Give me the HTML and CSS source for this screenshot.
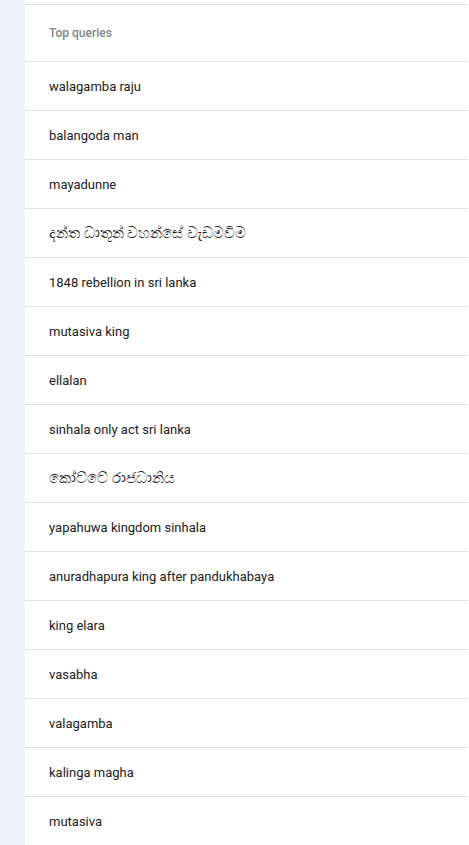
FILE: index.html
```html
<!DOCTYPE html>
<html lang="en">
<head>
    <meta charset="UTF-8">
    <meta name="viewport" content="width=device-width, initial-scale=1.0">
    <title>Top queries</title>
    <link rel="stylesheet" href="styles.css">
</head>
<body>
    <div class="page">
        <div class="sidebar"></div>
        <div class="card">
            <div class="card-header">Top queries</div>
            <ul class="query-list">
                <li>walagamba raju</li>
                <li>balangoda man</li>
                <li>mayadunne</li>
                <li class="si">දන්ත ධාතූන් වහන්සේ වැඩමවීම</li>
                <li>1848 rebellion in sri lanka</li>
                <li>mutasiva king</li>
                <li>ellalan</li>
                <li>sinhala only act sri lanka</li>
                <li class="si">කෝට්ටේ රාජධානිය</li>
                <li>yapahuwa kingdom sinhala</li>
                <li>anuradhapura king after pandukhabaya</li>
                <li>king elara</li>
                <li>vasabha</li>
                <li>valagamba</li>
                <li>kalinga magha</li>
                <li>mutasiva</li>
            </ul>
        </div>
    </div>
</body>
</html>
```

FILE: styles.css
```css
* {
    box-sizing: border-box;
    font-family: Roboto, "Noto Sans", sans-serif;
}

body {
    margin: 0;
    padding: 0;
    background-color: #ffffff;
    overflow: hidden;
}

.page {
    display: flex;
    height: 845px;
}

.sidebar {
    width: 25px;
    flex-shrink: 0;
    background-color: #eff2f8;
}

.card {
    flex: 1;
    margin-right: 1px;
    padding-top: 4px;
}

.card-header {
    height: 58px;
    display: flex;
    align-items: center;
    padding-left: 24px;
    border-top: 1px solid #e0e0e0;
    border-bottom: 1px solid #e0e0e0;
    font-size: 12px;
    font-weight: 500;
    color: #80868b;
}

.query-list {
    list-style: none;
    margin: 0;
    padding: 0;
}

.query-list li {
    height: 49px;
    display: flex;
    align-items: center;
    padding-left: 24px;
    border-bottom: 1px solid #e0e0e0;
    font-size: 13px;
    color: #202124;
}

.query-list li.si {
    font-size: 15px;
}
```
